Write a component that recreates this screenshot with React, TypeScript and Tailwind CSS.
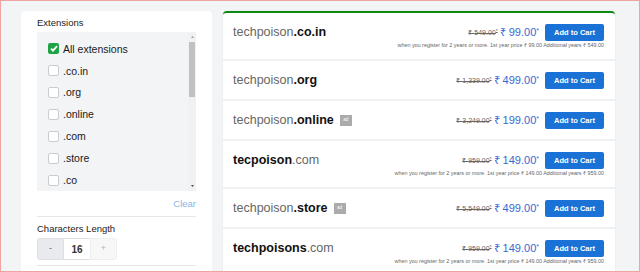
import React from "react";

type Row = {
  pre: string;
  preBold?: boolean;
  post: string;
  old: string;
  price: string;
  ad?: boolean;
  sub?: string;
};

const rows: Row[] = [
  { pre: "techpoison", post: ".co.in", old: "549.00", price: "99.00", sub: "when you register for 2 years or more. 1st year price ₹ 99.00 Additional years ₹ 549.00" },
  { pre: "techpoison", post: ".org", old: "1,339.00", price: "499.00" },
  { pre: "techpoison", post: ".online", old: "3,249.00", price: "199.00", ad: true },
  { pre: "tecpoison", preBold: true, post: ".com", old: "959.00", price: "149.00", sub: "when you register for 2 years or more. 1st year price ₹ 149.00 Additional years ₹ 959.00" },
  { pre: "techpoison", post: ".store", old: "5,549.00", price: "499.00", ad: true },
  { pre: "techpoisons", preBold: true, post: ".com", old: "959.00", price: "149.00", sub: "when you register for 2 years or more. 1st year price ₹ 149.00 Additional years ₹ 959.00" },
];

const exts = ["All extensions", ".co.in", ".org", ".online", ".com", ".store", ".co"];

function Check({ on }: { on: boolean }) {
  if (on)
    return (
      <span className="w-[11px] h-[11px] rounded-[2px] bg-[#1fa245] flex items-center justify-center shrink-0">
        <svg width="8" height="7" viewBox="0 0 8 7">
          <path d="M1 3.6 L3 5.6 L7 1.2" stroke="white" strokeWidth="1.8" fill="none" />
        </svg>
      </span>
    );
  return <span className="w-[11px] h-[11px] rounded-[2px] border border-[#c9ccd1] bg-white shrink-0" />;
}

export default function App() {
  return (
    <div
      className="w-[640px] h-[272px] overflow-hidden border border-[#f0a3a3] bg-[#f3f4f6] flex items-start gap-[11px] pl-[20px] pt-[10px]"
      style={{ fontFamily: '"Liberation Sans", Arial, sans-serif' }}
    >
      {/* Left filter card */}
      <div className="w-[191px] h-[300px] shrink-0 bg-white rounded-[4px] px-[16px] pt-[6px]">
        <div className="text-[9.5px] leading-[12px] text-[#222]">Extensions</div>
        <div className="mt-[3px] h-[159px] bg-[#f3f4f6] flex">
          <div className="flex-1 pl-[11px] pt-[6px] flex flex-col">
            {exts.map((e, i) => (
              <div key={e} className="h-[22px] flex items-center gap-[4px]">
                <Check on={i === 0} />
                <span className="text-[10.5px] text-[#1a1a1a] leading-none">{e}</span>
              </div>
            ))}
          </div>
          <div className="w-[8px] bg-[#f1f1f1] flex flex-col items-center">
            <svg width="5" height="4" viewBox="0 0 5 4" className="mt-[3px]">
              <path d="M2.5 1 L4 3 L1 3 Z" fill="#a0a0a0" />
            </svg>
            <div className="mt-[3px] w-[6px] h-[55px] bg-[#c1c1c1]" />
            <div className="flex-1" />
            <svg width="5" height="4" viewBox="0 0 5 4" className="mb-[3px]">
              <path d="M1 1 L4 1 L2.5 3 Z" fill="#505050" />
            </svg>
          </div>
        </div>
        <div className="mt-[7px] text-right text-[9.5px] leading-[12px] text-[#8db3e6]">Clear</div>
        <div className="mt-[6px] h-px bg-[#e6e7ea]" />
        <div className="mt-[6px] text-[9.5px] leading-[12px] text-[#222]">Characters Length</div>
        <div className="mt-[3px] flex h-[22px] w-[80px]">
          <div className="w-[27px] bg-[#e8eaed] border border-[#dcdfe3] rounded-l-[3px] flex items-center justify-center text-[9px] text-[#666]">-</div>
          <div className="w-[26px] bg-white border-y border-[#dcdfe3] flex items-center justify-center text-[10px] font-bold text-[#333]">16</div>
          <div className="w-[27px] bg-[#f7f7f8] border border-[#eceef0] rounded-r-[3px] flex items-center justify-center text-[9px] text-[#b5b5b5]">+</div>
        </div>
        <div className="mt-[5px] h-px bg-[#e6e7ea]" />
      </div>

      {/* Right results panel */}
      <div className="w-[392px] h-[300px] shrink-0 bg-white border-t-2 border-[#0e8a12] rounded-t-[4px] shadow-[0_0_2px_rgba(0,0,0,0.08)]">
        {rows.map((r, i) => (
          <div key={i} className="px-[10px] pr-[11px] pt-[11px] pb-[10px] border-b-2 border-[#f0f1f3]">
            <div className="h-[17px] flex items-center justify-between">
              <div className="flex items-center text-[12.5px] leading-none">
                <span className={r.preBold ? "font-bold text-[#111]" : "text-[#666]"}>{r.pre}</span>
                <span className={r.preBold ? "text-[#666]" : "font-bold text-[#111]"}>{r.post}</span>
                {r.ad && (
                  <span className="ml-[6px] w-[12px] h-[11px] bg-[#ababab] text-white text-[4.5px] flex items-center justify-center">ad</span>
                )}
              </div>
              <div className="flex items-center">
                <span className="text-[7px] text-[#666] line-through leading-none">
                  ₹ {r.old}
                  <sup className="text-[5px]">*</sup>
                </span>
                <span className="ml-[2px] text-[11px] text-[#3569d4] leading-none">
                  ₹ {r.price}
                  <span className="text-[7px] align-[3px]">*</span>
                </span>
                <button className="ml-[6px] w-[59px] h-[17px] rounded-[2px] bg-[#1a72d6] text-white text-[7.5px] font-bold">
                  Add to Cart
                </button>
              </div>
            </div>
            {r.sub && (
              <div className="text-right text-[5.4px] leading-[8px] text-[#666] whitespace-nowrap">{r.sub}</div>
            )}
          </div>
        ))}
      </div>
    </div>
  );
}
